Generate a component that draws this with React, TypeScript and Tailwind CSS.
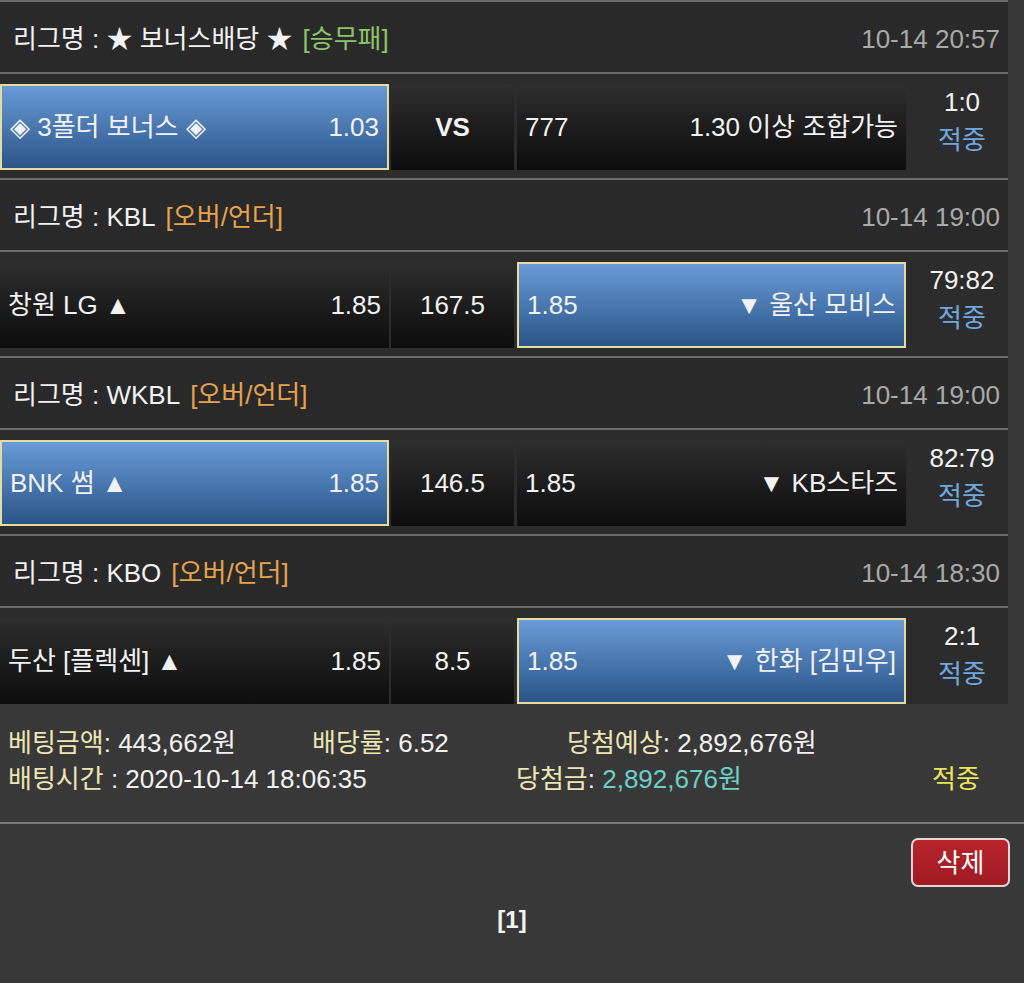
import React from 'react';

type Game = {
  league: string;
  tag: string;
  tagColor: string;
  time: string;
  home: string;
  homeOdds: string;
  mid: string;
  midBold?: boolean;
  awayOdds: string;
  away: string;
  pick: 'home' | 'away';
  score: string;
};

const GAMES: Game[] = [
  {
    league: '★ 보너스배당 ★',
    tag: '[승무패]',
    tagColor: 'text-[#8cc46a]',
    time: '10-14 20:57',
    home: '◈ 3폴더 보너스 ◈',
    homeOdds: '1.03',
    mid: 'VS',
    midBold: true,
    awayOdds: '777',
    away: '1.30 이상 조합가능',
    pick: 'home',
    score: '1:0',
  },
  {
    league: 'KBL',
    tag: '[오버/언더]',
    tagColor: 'text-[#e8a24c]',
    time: '10-14 19:00',
    home: '창원 LG ▲',
    homeOdds: '1.85',
    mid: '167.5',
    awayOdds: '1.85',
    away: '▼ 울산 모비스',
    pick: 'away',
    score: '79:82',
  },
  {
    league: 'WKBL',
    tag: '[오버/언더]',
    tagColor: 'text-[#e8a24c]',
    time: '10-14 19:00',
    home: 'BNK 썸 ▲',
    homeOdds: '1.85',
    mid: '146.5',
    awayOdds: '1.85',
    away: '▼ KB스타즈',
    pick: 'home',
    score: '82:79',
  },
  {
    league: 'KBO',
    tag: '[오버/언더]',
    tagColor: 'text-[#e8a24c]',
    time: '10-14 18:30',
    home: '두산 [플렉센] ▲',
    homeOdds: '1.85',
    mid: '8.5',
    awayOdds: '1.85',
    away: '▼ 한화 [김민우]',
    pick: 'away',
    score: '2:1',
  },
];

function BetCell({ selected, left, right }: { selected: boolean; left: string; right: string }) {
  return (
    <div
      className={
        selected
          ? 'w-[389px] h-[86px] flex items-center justify-between px-[8px] border-2 border-[#e6dca0] bg-linear-to-b from-[#6a9bd8] to-[#2a5588]'
          : 'w-[389px] h-[86px] flex items-center justify-between px-[8px] bg-linear-to-b from-[#2e2e2e] to-[#0d0d0d]'
      }
    >
      <span className="whitespace-nowrap">{left}</span>
      <span className="whitespace-nowrap">{right}</span>
    </div>
  );
}

function GameGroup({ game, last }: { game: Game; last: boolean }) {
  return (
    <>
      {/* league header */}
      <div className="h-[70px] bg-[#292929] flex items-center justify-between pl-[13px] pr-[8px] pt-[4px]">
        <div className="whitespace-nowrap">
          리그명 : {game.league}
          <span className={`ml-[10px] ${game.tagColor}`}>{game.tag}</span>
        </div>
        <div className="text-[#a9a9a9]">{game.time}</div>
      </div>
      <div className="h-[2px] bg-[#6c6c6c]" />

      {/* match row */}
      <div className={`${last ? 'h-[96px]' : 'h-[104px] pb-[8px]'} bg-[#2c2c2c] pt-[10px] flex`}>
        <BetCell selected={game.pick === 'home'} left={game.home} right={game.homeOdds} />
        <div
          className={`ml-[2px] w-[123px] h-[86px] flex items-center justify-center bg-linear-to-b from-[#2e2e2e] to-[#0d0d0d] ${
            game.midBold ? 'font-bold' : ''
          }`}
        >
          {game.mid}
        </div>
        <div className="ml-[3px]">
          <BetCell selected={game.pick === 'away'} left={game.awayOdds} right={game.away} />
        </div>
        <div className="w-[102px] h-[86px] pl-[10px] pb-[12px] flex flex-col items-center justify-center leading-[38px]">
          <div>{game.score}</div>
          <div className="text-[#6fa8e0]">적중</div>
        </div>
      </div>
      {!last && <div className="h-[2px] bg-[#6c6c6c]" />}
    </>
  );
}

export default function App() {
  return (
    <div className="min-h-[983px] bg-[#383838] text-[#f2f2f2] text-[26px] leading-[30px] font-['Liberation_Sans','Noto_Sans_CJK_KR',sans-serif]">
      <div className="w-[1008px]">
        <div className="h-[2px] bg-[#6c6c6c]" />
        {GAMES.map((g, i) => (
          <GameGroup key={g.league} game={g} last={i === GAMES.length - 1} />
        ))}
      </div>

      {/* bet summary */}
      <div className="h-[118px] pt-[21px] pl-[8px] leading-[36px]">
        <div className="flex whitespace-nowrap">
          <div className="w-[304px]">
            <span className="text-[#ece6b4]">베팅금액</span>: 443,662원
          </div>
          <div className="w-[255px]">
            <span className="text-[#ece6b4]">배당률</span>: 6.52
          </div>
          <div>
            <span className="text-[#ece6b4]">당첨예상</span>: 2,892,676원
          </div>
        </div>
        <div className="flex whitespace-nowrap">
          <div className="w-[508px]">
            <span className="text-[#ece6b4]">배팅시간</span> : 2020-10-14 18:06:35
          </div>
          <div className="w-[416px]">
            <span className="text-[#ece6b4]">당첨금</span>: <span className="text-[#6ccfc8]">2,892,676원</span>
          </div>
          <div className="text-[#ece45c]">적중</div>
        </div>
      </div>
      <div className="h-[2px] bg-[#7a7a7a]" />

      <div className="flex justify-end pt-[14px] pr-[14px]">
        <button className="w-[99px] h-[49px] rounded-[7px] border-2 border-[#e6d6d6] bg-linear-to-b from-[#b8242c] to-[#a01a22] text-white">
          삭제
        </button>
      </div>

      <div className="text-center font-bold text-[24px] pt-[18px]">[1]</div>
    </div>
  );
}
